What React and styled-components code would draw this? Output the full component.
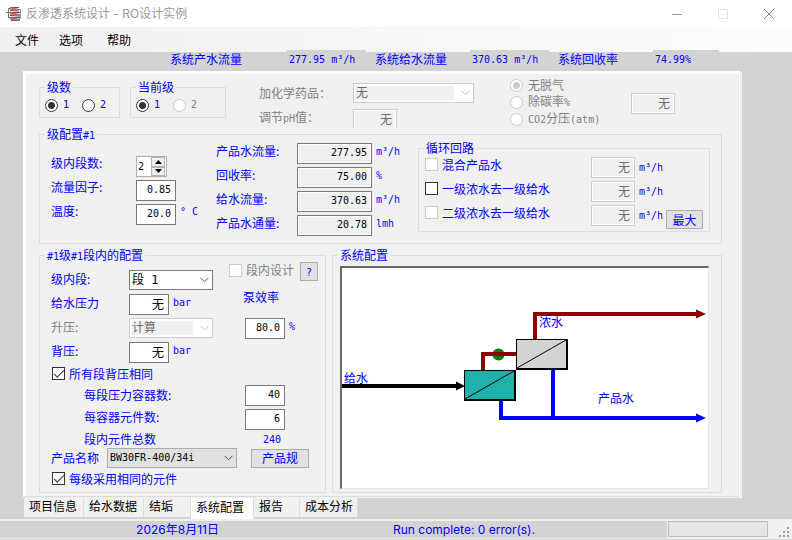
import React, { useState } from "react";
import styled, { createGlobalStyle, css } from "styled-components";

const tabs = [
  { id: "project", label: "项目信息", width: 60 },
  { id: "feed", label: "给水数据", width: 60 },
  { id: "scaling", label: "结垢", width: 47 },
  { id: "config", label: "系统配置", width: 63 },
  { id: "report", label: "报告", width: 46 },
  { id: "cost", label: "成本分析", width: 58 },
];

const passResults = [
  { id: "permeate", label: "产品水流量:", value: "277.95", unit: "m³/h" },
  { id: "recovery", label: "回收率:", value: "75.00", unit: "%" },
  { id: "feedflow", label: "给水流量:", value: "370.63", unit: "m³/h" },
  { id: "flux", label: "产品水通量:", value: "20.78", unit: "lmh" },
];

const loops = [
  { id: "blend", label: "混合产品水", disabled: true },
  { id: "loop11", label: "一级浓水去一级给水", disabled: false },
  { id: "loop21", label: "二级浓水去一级给水", disabled: true },
];

const AppIcon = () => (
  <svg width="16" height="16" viewBox="0 0 16 16">
    <path d="M0 6.500h4M2.500 2v9M2 2.500h3M2 11.500h3" stroke="#777" fill="none" />
    <path d="M13 3.500h1.500v9H13" stroke="#999" fill="none" />
    <path d="M4 1.500h9M4 4.500l9 .5M4 6.500h10M4 9.500l10 .5M4 11.500h10M5 14.500h9" stroke="#555" />
    <path d="M4 2.500l9 1.500M4 7.500l10 1.500M4 12.500l10 1.500" stroke="#888" strokeWidth="2" />
    <path d="M5 2.500l6 1M5 7.500l6 1M5 12.500l6 1" stroke="#f05a64" strokeWidth="2" />
  </svg>
);

const Chevron = () => (
  <svg width="9" height="6" viewBox="0 0 9 6">
    <path d="M.5 .8l4 4l4-4" fill="none" stroke="currentColor" />
  </svg>
);

const Diagram = () => (
  <svg width="366" height="220" viewBox="0 0 366 220">
    {/* feed */}
    <path d="M0 118h116" stroke="#000" strokeWidth="4" />
    <path d="M114 113.500l9 4.500l-9 4.500z" fill="#000" />
    {/* interstage */}
    <circle cx="156.500" cy="86.500" r="6" fill="#008000" />
    <path d="M141 103v-17h34" stroke="#8b0000" strokeWidth="4" fill="none" />
    {/* concentrate */}
    <path d="M193 72v-26h163" stroke="#8b0000" strokeWidth="4" fill="none" />
    <path d="M354 41.500l10 4.500l-10 4.500z" fill="#8b0000" />
    {/* permeate */}
    <path d="M159 132v18h197" stroke="#00f" strokeWidth="4" fill="none" />
    <path d="M211 101v48" stroke="#00f" strokeWidth="4" />
    <path d="M354 145.500l10 4.500l-10 4.500z" fill="#00f" />
    {/* stages */}
    <rect x="122" y="102" width="52" height="31" fill="#000" />
    <rect x="123" y="103" width="49" height="28" fill="#20b2aa" />
    <path d="M123 131l49-28" stroke="#000" />
    <rect x="174" y="71" width="52" height="31" fill="#000" />
    <rect x="175" y="72" width="49" height="28" fill="#d3d3d3" />
    <path d="M175 100l49-28" stroke="#000" />
    <text x="2" y="115">给水</text>
    <text x="197" y="59">浓水</text>
    <text x="256" y="135">产品水</text>
  </svg>
);

const App = () => {
  const [active, setActive] = useState("config");

  return (
    <Window>
      <GlobalStyle />
      <TitleBar>
        <AppIcon />
        <h1>反渗透系统设计 - RO设计实例</h1>
        <CaptionButton type="button" aria-label="minimize">
          <svg width="12" height="12">
            <path d="M1 6.500h10" stroke="#999" />
          </svg>
        </CaptionButton>
        <CaptionButton type="button" aria-label="maximize">
          <svg width="12" height="12">
            <rect x="1.500" y="1.500" width="9" height="9" stroke="#e4e4e4" fill="none" />
          </svg>
        </CaptionButton>
        <CaptionButton type="button" aria-label="close">
          <svg width="12" height="12">
            <path d="M1 1l10 10M11 1l-10 10" stroke="#888" />
          </svg>
        </CaptionButton>
      </TitleBar>

      <MenuBar>
        <button type="button">文件</button>
        <button type="button">选项</button>
        <button type="button">帮助</button>
      </MenuBar>

      <Workspace>
        <Readouts>
          <dt>系统产水流量</dt>
          <dd>277.95 m³/h</dd>
          <dt>系统给水流量</dt>
          <dd>370.63 m³/h</dd>
          <dt>系统回收率</dt>
          <dd>74.99%</dd>
        </Readouts>

        <Panel>
          <Options>
            <PassGroup $width={81}>
              <legend>级数</legend>
              <RadioLabel>
                <Radio name="passes" defaultChecked />
                <Num>1</Num>
              </RadioLabel>
              <RadioLabel>
                <Radio name="passes" />
                <Num>2</Num>
              </RadioLabel>
            </PassGroup>
            <PassGroup $width={96}>
              <legend>当前级</legend>
              <RadioLabel>
                <Radio name="current" defaultChecked />
                <Num>1</Num>
              </RadioLabel>
              <RadioLabel $muted>
                <Radio name="current" disabled />
                <Num>2</Num>
              </RadioLabel>
            </PassGroup>
            <Chemicals>
              <label htmlFor="chemical">加化学药品：</label>
              <SelectBox $width={121} $off>
                <select id="chemical" disabled>
                  <option>无</option>
                </select>
                <Chevron />
              </SelectBox>
              <label htmlFor="ph">
                调节<Num>pH</Num>值：
              </label>
              <Clip>
                <Field id="ph" defaultValue="无" disabled />
              </Clip>
            </Chemicals>
            <Degas>
              <RadioLabel $muted>
                <Radio name="degas" defaultChecked disabled />
                无脱气
              </RadioLabel>
              <RadioLabel $muted>
                <Radio name="degas" disabled />
                <span>
                  除碳率<Num>%</Num>
                </span>
              </RadioLabel>
              <RadioLabel $muted>
                <Radio name="degas" disabled />
                <span>
                  <Num>CO2</Num>分压<Num>(atm)</Num>
                </span>
              </RadioLabel>
            </Degas>
            <Field aria-label="脱气" defaultValue="无" disabled />
          </Options>

          <PassConfig>
            <legend>
              级配置<Num>#1</Num>
            </legend>
            <Inputs>
              <label htmlFor="stages">级内段数:</label>
              <Spinner>
                <input id="stages" defaultValue="2" />
                <div>
                  <button type="button" aria-label="up">
                    <svg width="7" height="4">
                      <path d="M0 4l3.500-4l3.500 4z" />
                    </svg>
                  </button>
                  <button type="button" aria-label="down">
                    <svg width="7" height="4">
                      <path d="M0 0l3.500 4l3.500-4z" />
                    </svg>
                  </button>
                </div>
              </Spinner>
              <span />
              <label htmlFor="factor">流量因子:</label>
              <Field id="factor" $width={40} defaultValue="0.85" />
              <span />
              <label htmlFor="temp">温度:</label>
              <Field id="temp" $width={40} defaultValue="20.0" />
              <Num>° C</Num>
            </Inputs>
            <Results>
              {passResults.map(({ id, label, value, unit }) => (
                <React.Fragment key={id}>
                  <label htmlFor={id}>{label}</label>
                  <Field id={id} $width={75} defaultValue={value} readOnly />
                  <Num>{unit}</Num>
                </React.Fragment>
              ))}
            </Results>
            <Loops>
              <legend>循环回路</legend>
              <div>
                {loops.map(({ id, label, disabled }) => (
                  <LoopRow key={id}>
                    <label>
                      <Check disabled={disabled} />
                      {label}
                    </label>
                    <Field aria-label={label} defaultValue="无" disabled />
                    <Num>m³/h</Num>
                  </LoopRow>
                ))}
              </div>
              <Button type="button" $width={37}>
                最大
              </Button>
            </Loops>
          </PassConfig>

          <Lower>
            <StageConfig>
              <legend>
                <Num>#1</Num>级<Num>#1</Num>段内的配置
              </legend>
              <StageTop>
                <StageInputs>
                  <label htmlFor="stage">级内段:</label>
                  <SelectBox $width={84}>
                    <select id="stage">
                      <option>段 1</option>
                    </select>
                    <Chevron />
                  </SelectBox>
                  <label htmlFor="feedp">给水压力</label>
                  <FieldUnit>
                    <Field id="feedp" $width={40} defaultValue="无" />
                    <Num>bar</Num>
                  </FieldUnit>
                  <MutedLabel htmlFor="boost">升压:</MutedLabel>
                  <SelectBox $width={84} $off>
                    <select id="boost" disabled>
                      <option>计算</option>
                    </select>
                    <Chevron />
                  </SelectBox>
                  <label htmlFor="backp">背压:</label>
                  <FieldUnit>
                    <Field id="backp" $width={40} defaultValue="无" />
                    <Num>bar</Num>
                  </FieldUnit>
                </StageInputs>
                <Pump>
                  <div>
                    <MutedLabel>
                      <Check disabled />
                      段内设计
                    </MutedLabel>
                    <Button type="button" $width={18}>
                      <Num>?</Num>
                    </Button>
                  </div>
                  <label htmlFor="pump">泵效率</label>
                  <FieldUnit>
                    <Field id="pump" $width={40} defaultValue="80.0" />
                    <Num>%</Num>
                  </FieldUnit>
                </Pump>
              </StageTop>
              <CheckLabel>
                <Check defaultChecked />
                所有段背压相同
              </CheckLabel>
              <Counts>
                <CountLabels>
                  <label htmlFor="vessels">每段压力容器数:</label>
                  <label htmlFor="elements">每容器元件数:</label>
                  <label htmlFor="total">段内元件总数</label>
                </CountLabels>
                <CountValues>
                  <Field id="vessels" $width={40} defaultValue="40" />
                  <Field id="elements" $width={40} defaultValue="6" />
                  <output id="total">240</output>
                </CountValues>
              </Counts>
              <Product>
                <label htmlFor="product">产品名称</label>
                <SelectBox $width={130} $flat>
                  <select id="product">
                    <option>BW30FR-400/34i</option>
                  </select>
                  <Chevron />
                </SelectBox>
                <Button type="button" $width={58}>
                  产品规
                </Button>
              </Product>
              <CheckLabel>
                <Check defaultChecked />
                每级采用相同的元件
              </CheckLabel>
            </StageConfig>
            <SystemConfig>
              <legend>系统配置</legend>
              <Canvas>
                <Diagram />
              </Canvas>
            </SystemConfig>
          </Lower>
        </Panel>

        <Tabs>
          {tabs.map(({ id, label, width }) => (
            <Tab
              key={id}
              type="button"
              $width={width}
              $active={active === id}
              onClick={() => setActive(id)}
            >
              {label}
            </Tab>
          ))}
        </Tabs>
      </Workspace>

      <StatusBar>
        <StatusText>
          <span>2026年8月11日</span>
          <span>Run complete: 0 error(s).</span>
        </StatusText>
        <ProgressBox />
        <svg width="24" height="17">
          <path
            d="M19 6h2v2h-2zM15 10h2v2h-2zM19 10h2v2h-2zM11 14h2v2h-2zM15 14h2v2h-2zM19 14h2v2h-2z"
            fill="#a0a0a0"
          />
        </svg>
      </StatusBar>
    </Window>
  );
};

const mono = css`
  font-family: "DejaVu Sans Mono", "Noto Sans CJK SC", monospace;
  font-size: 10px;
`;

const GlobalStyle = createGlobalStyle`
  * {
    box-sizing: border-box;
  }
  body {
    margin: 0;
    color: #00f;
    font: 12px/14px "Noto Sans CJK SC", sans-serif;
  }
  button, input, select {
    margin: 0;
    padding: 0;
    font: inherit;
    color: inherit;
  }
  fieldset {
    margin: 0;
    padding: 0;
    min-width: 0;
    border: 1px solid #dcdcdc;
  }
  legend {
    margin-left: 5px;
    padding: 0 2px;
    height: 14px;
  }
  label, span, legend {
    white-space: nowrap;
  }
`;

const Window = styled.div`
  display: flex;
  flex-direction: column;
  min-height: 100vh;
  background: #d3d3d3;
`;

const TitleBar = styled.header`
  display: flex;
  align-items: center;
  height: 27px;
  padding-left: 6px;
  background: #fff;
  h1 {
    flex: 1;
    margin: 0 0 0 4px;
    font: 12px/16px Inter, "Noto Sans CJK SC", sans-serif;
    color: #999;
  }
`;

const CaptionButton = styled.button`
  display: flex;
  align-items: center;
  justify-content: center;
  width: 46px;
  height: 27px;
  background: none;
  border: none;
`;

const MenuBar = styled.nav`
  display: flex;
  gap: 20px;
  height: 25px;
  padding-left: 15px;
  background: linear-gradient(90deg, #f0f0f0, #fdfdfd);
  button {
    width: 24px;
    white-space: nowrap;
    color: #000;
    background: none;
    border: none;
  }
  button:last-child {
    margin-left: 4px;
  }
`;

const Workspace = styled.main`
  flex: 1;
  padding: 0 50px 0 23px;
`;

const Readouts = styled.dl`
  display: flex;
  height: 19px;
  margin: 0;
  padding-left: 147px;
  dt {
    flex: none;
    margin-right: 9px;
  }
  dt:first-child {
    margin-right: 45px;
  }
  dd + dt {
    width: 86px;
  }
  dd {
    ${mono}
    flex: none;
    width: 79px;
    height: 19px;
    margin: -2px 9px 0 0;
    padding-left: 2px;
    line-height: 20px;
    background: #d3d3d3;
  }
  dd:last-child {
    width: 66px;
  }
`;

const Panel = styled.section`
  margin: 0 2px 1px 0;
  padding: 6px 17px 3px 13px;
  background: #f0f0f0;
  border: 3px solid #fff;
  border-right-width: 1px;
  border-bottom: 1px solid #dcdcdc;
  box-shadow: 2px 1px #f0f0f0;
`;

const Num = styled.span`
  ${mono}
`;

const Options = styled.div`
  display: flex;
  align-items: flex-start;
  height: 47px;
  > input {
    margin: 13px 0 0 4px;
  }
`;

const PassGroup = styled.fieldset`
  display: flex;
  gap: 13px;
  width: ${({ $width }) => $width}px;
  height: 38px;
  margin-right: 10px;
  padding-top: 4px;
  legend + label {
    margin-left: 5px;
  }
`;

const RadioLabel = styled.label`
  display: flex;
  align-items: center;
  gap: 5px;
  height: 14px;
  color: ${({ $muted }) => ($muted ? "#808080" : "inherit")};
`;

const Radio = styled.input.attrs({ type: "radio" })`
  appearance: none;
  width: 13px;
  height: 13px;
  background: #fff;
  border: 1px solid #333;
  border-radius: 50%;
  &:disabled {
    border-color: #ccc;
  }
  &:checked {
    background: radial-gradient(circle, #333 0 3px, #fff 4px);
  }
  &:checked:disabled {
    background: radial-gradient(circle, #ccc 0 3px, #fff 4px);
  }
`;

const Check = styled.input.attrs({ type: "checkbox" })`
  appearance: none;
  flex: none;
  display: grid;
  place-content: center;
  width: 13px;
  height: 13px;
  margin-right: 4px;
  background: #fff;
  border: 1px solid #333;
  &:disabled {
    border-color: #ccc;
  }
  &:checked::before {
    content: "";
    width: 9px;
    height: 4px;
    margin-bottom: 3px;
    border: solid #333;
    border-width: 0 0 1px 1px;
    transform: rotate(-45deg);
  }
`;

const Chemicals = styled.div`
  display: grid;
  grid-template-columns: 94px 121px;
  grid-template-rows: 20px 20px;
  row-gap: 5px;
  align-items: center;
  margin: 3px 36px 0 23px;
  color: #808080;
`;

const Clip = styled.div`
  height: 19px;
  overflow: hidden;
`;

const Degas = styled.div`
  display: flex;
  flex-direction: column;
  gap: 3px;
  width: 117px;
  margin-top: -2px;
`;

const Field = styled.input`
  display: block;
  width: ${({ $width = 44 }) => $width}px;
  height: 21px;
  padding: 0 4px 2px 0;
  text-align: right;
  font: 12px/14px "DejaVu Sans Mono", "Noto Sans CJK SC", monospace;
  font-size: ${({ defaultValue }) => (defaultValue === "无" ? 12 : 10)}px;
  color: #000;
  background: #fff;
  border: 1px solid #7a7a7a;
  &:read-only {
    background: #f0f0f0;
    box-shadow: inset 0 0 0 1px #fff;
  }
  &:disabled {
    color: #6d6d6d;
    border-color: #ccc;
  }
`;

const SelectBox = styled.div`
  display: grid;
  align-items: center;
  width: ${({ $width }) => $width}px;
  height: 20px;
  color: ${({ $off }) => ($off ? "#bbb" : "#555")};
  select {
    grid-area: 1 / 1;
    appearance: none;
    height: 20px;
    padding: 0 20px 0 2px;
    font-size: ${({ $flat }) => ($flat ? 10 : 12)}px;
    font-family: "DejaVu Sans Mono", "Noto Sans CJK SC", monospace;
    color: #000;
    border: 1px solid ${({ $flat }) => ($flat ? "#adadad" : "#7a7a7a")};
    border-radius: 0;
    background: ${({ $flat }) => ($flat ? "#e1e1e1" : "#fff")};
    opacity: 1;
  }
  select:disabled {
    color: #6d6d6d;
    border-color: #ccc;
    background: linear-gradient(#f0f0f0, #f0f0f0) 1px 2px / calc(100% - 20px)
      14px no-repeat #fff;
  }
  svg {
    grid-area: 1 / 1;
    justify-self: end;
    margin-right: 4px;
    pointer-events: none;
  }
`;

const Button = styled.button`
  flex: none;
  width: ${({ $width }) => $width}px;
  height: 19px;
  line-height: 14px;
  background: #e1e1e1;
  border: 1px solid #adadad;
`;

const PassConfig = styled.fieldset`
  display: flex;
  align-items: flex-start;
  height: 117px;
`;

const Inputs = styled.div`
  display: grid;
  grid-template-columns: 85px 40px 36px;
  grid-auto-rows: 21px;
  gap: 3px 0;
  margin: 15px 0 0 11px;
  > span {
    padding: 1px 0 0 4px;
  }
`;

const Spinner = styled.div`
  display: flex;
  width: 31px;
  height: 21px;
  background: #fff;
  border: 1px solid #abadb3;
  input {
    ${mono}
    width: 14px;
    padding-left: 1px;
    color: #000;
    background: none;
    border: none;
  }
  div {
    flex: 1;
    display: flex;
    flex-direction: column;
    padding-right: 1px;
  }
  button {
    flex: 1;
    display: flex;
    align-items: center;
    justify-content: center;
    background: #f0f0f0;
    border: 1px solid #b4b4b4;
  }
`;

const Results = styled.div`
  display: grid;
  grid-template-columns: 81px 75px 46px;
  grid-auto-rows: 21px;
  gap: 3px 0;
  margin: 2px 0 0 4px;
  > label {
    padding-top: 1px;
  }
  > span {
    padding: 2px 0 0 4px;
  }
`;

const Loops = styled.fieldset`
  flex: 1;
  display: flex;
  align-items: flex-end;
  justify-content: space-between;
  height: 91px;
  margin-right: 11px;
  padding: 0 6px 2px 0;
`;

const LoopRow = styled.div`
  display: grid;
  grid-template-columns: 166px 44px 28px;
  height: 24px;
  margin-left: 6px;
  label {
    display: flex;
    align-items: center;
    height: 15px;
  }
  > span {
    padding: 4px 0 0 4px;
  }
`;

const Lower = styled.div`
  display: flex;
  gap: 6px;
  margin-top: 4px;
`;

const StageConfig = styled.fieldset`
  width: 287px;
  height: 245px;
`;

const StageTop = styled.div`
  display: flex;
  padding-left: 11px;
`;

const StageInputs = styled.div`
  display: grid;
  grid-template-columns: 78px 100px;
  grid-auto-rows: 21px;
  row-gap: 3px;
  margin-top: 8px;
  > label {
    padding-top: 2px;
  }
`;

const FieldUnit = styled.div`
  display: flex;
  gap: 4px;
  span {
    padding-top: 2px;
  }
`;

const MutedLabel = styled.label`
  color: #808080;
`;

const Pump = styled.div`
  > div:first-child {
    display: flex;
    gap: 6px;
    height: 28px;
  }
  > div:first-child label {
    display: flex;
    align-items: center;
    height: 16px;
  }
  > label {
    display: block;
    height: 28px;
    padding-left: 14px;
  }
  > div:last-child {
    padding-left: 16px;
  }
`;

const CheckLabel = styled.label`
  display: flex;
  align-items: center;
  height: 21px;
  padding-left: 12px;
`;

const Counts = styled.div`
  display: flex;
  justify-content: space-between;
  height: 64px;
  padding: 1px 40px 0 44px;
`;

const CountLabels = styled.div`
  display: flex;
  flex-direction: column;
  gap: 8px;
  padding-top: 3px;
`;

const CountValues = styled.div`
  display: flex;
  flex-direction: column;
  gap: 3px;
  output {
    ${mono}
    padding-right: 4px;
    text-align: right;
  }
`;

const Product = styled.div`
  display: flex;
  align-items: center;
  height: 20px;
  padding-left: 11px;
  label {
    width: 56px;
  }
  button {
    margin-left: 14px;
  }
`;

const SystemConfig = styled.fieldset`
  flex: 1;
  padding: 4px 12px 3px 7px;
  legend {
    margin-left: -2px;
  }
`;

const Canvas = styled.div`
  height: 223px;
  overflow: hidden;
  background: #fff;
  border: 1px solid #e3e3e3;
  border-top: 2px solid #696969;
  border-left: 2px solid #696969;
  svg {
    display: block;
  }
  text {
    fill: #00f;
  }
`;

const Tabs = styled.nav`
  display: flex;
  padding-left: 1px;
`;

const Tab = styled.button`
  width: ${({ $width }) => $width}px;
  height: ${({ $active }) => ($active ? 21 : 19)}px;
  padding: 0 0 3px 5px;
  text-align: left;
  white-space: nowrap;
  color: #000;
  background: ${({ $active }) => ($active ? "#fff" : "#f0f0f0")};
  border: none;
  border-right: 1px solid #dcdcdc;
`;

const StatusBar = styled.footer`
  display: flex;
  height: 21px;
  background: #f0f0f0;
  border-top: 2px solid #f0f0f0;
  border-bottom: 1px solid #d3d3d3;
`;

const StatusText = styled.div`
  flex: 1;
  display: flex;
  height: 17px;
  font: 12px/17px Inter, "Noto Sans CJK SC", sans-serif;
  background: #d3d3d3;
  span:first-child {
    width: 355px;
    text-align: center;
  }
  span:last-child {
    padding-left: 38px;
  }
`;

const ProgressBox = styled.div`
  width: 100px;
  height: 16px;
  margin-left: 1px;
  background: #e6e6e6;
  border: 1px solid #bcbcbc;
`;

export default App;
